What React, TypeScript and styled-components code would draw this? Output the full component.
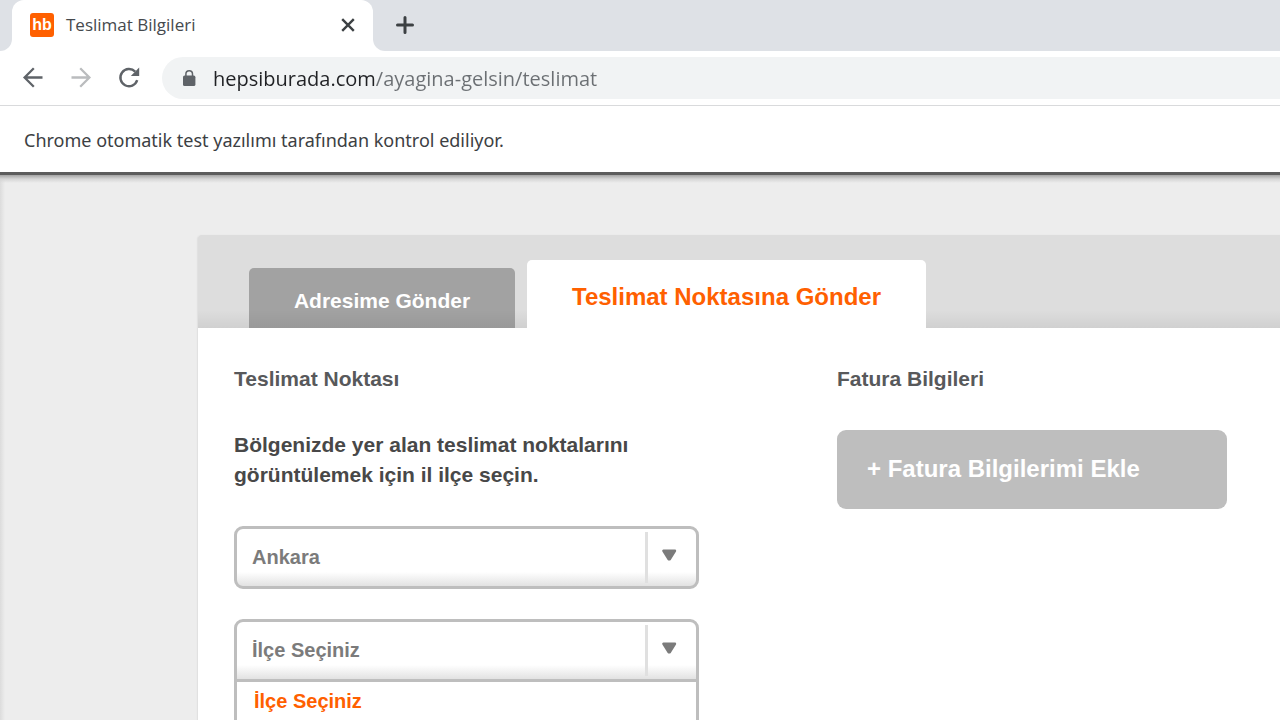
import React, { useState } from "react";
import styled, { createGlobalStyle } from "styled-components";

const GlobalStyle = createGlobalStyle`
  *, *::before, *::after { box-sizing: border-box; }
  body { margin: 0; background: #ededed; }
  button, input, select { font: inherit; }
`;

const uiFont = `"Open Sans", "Noto Sans", sans-serif`;
const siteFont = `"Liberation Sans", Arial, sans-serif`;

const Window = styled.div`
  display: flex;
  flex-direction: column;
  height: 100vh;
  overflow: hidden;
`;

const BrowserChrome = styled.header`
  font-family: ${uiFont};
  background: #fff;
  flex: none;
`;

const TabStrip = styled.div`
  display: flex;
  height: 51px;
  background: #fff;
`;

const StripEdge = styled.div`
  width: 12px;
  background: #dee1e6;
  border-bottom-right-radius: 12px;
`;

const StripRest = styled.div`
  flex: 1;
  display: flex;
  align-items: center;
  padding: 0 0 2px 20px;
  background: #dee1e6;
  border-bottom-left-radius: 12px;
`;

const TabBackdrop = styled.div`
  display: flex;
  width: 361px;
  background: #dee1e6;
`;

const BrowserTab = styled.div`
  flex: 1;
  display: flex;
  align-items: center;
  padding: 0 13px 2px 18px;
  background: #fff;
  border-radius: 12px 12px 0 0;
`;

const Favicon = styled.span`
  width: 24px;
  height: 24px;
  border-radius: 3px;
  background: #ff6000;
  color: #fff;
  font: bold 16px/24px ${siteFont};
  text-align: center;
`;

const TabTitle = styled.span`
  flex: 1;
  margin-left: 12px;
  font-size: 17px;
  line-height: 24px;
  color: #45494d;
`;

const IconButton = styled.button<{ $color?: string }>`
  display: grid;
  place-items: center;
  width: 24px;
  height: 24px;
  padding: 0;
  border: 0;
  background: none;
  color: ${(p) => p.$color ?? "#5f6368"};
`;

const Toolbar = styled.div`
  display: flex;
  align-items: center;
  gap: 24px;
  height: 55px;
  padding-left: 21px;
  border-bottom: 1px solid #d9dadc;
`;

const AddressBar = styled.label`
  flex: 1;
  display: flex;
  align-items: center;
  gap: 16px;
  height: 42px;
  margin-left: -3px;
  padding-left: 20px;
  border-radius: 21px 0 0 21px;
  background: #f1f3f4;
`;

const AddressInput = styled.input`
  flex: 1;
  min-width: 0;
  height: 32px;
  padding: 0;
  border: 0;
  outline: 0;
  font-size: 20px;
  color: transparent;
  caret-color: #202124;
  background: linear-gradient(to right, #202124 163px, #6b6f73 163px);
  background-clip: text;
  -webkit-background-clip: text;
`;

const InfoBar = styled.p`
  margin: 0;
  padding: 20px 24px 18px;
  font-family: "Noto Sans", "Open Sans", sans-serif;
  font-size: 18px;
  line-height: 28px;
  color: #3c4043;
`;

const Page = styled.main`
  flex: 1;
  display: flex;
  flex-direction: column;
  padding: 60px 0 0 198px;
  border-top: 3px solid #5c5c5c;
  background:
    linear-gradient(to bottom, #a4a4a4, #d6d6d6 4px, #ededed00 8px),
    linear-gradient(to right, #dcdcdc, #ededed 5px);
  font-family: ${siteFont};
  font-weight: bold;
`;

const Panel = styled.section`
  flex: 1;
  display: flex;
  flex-direction: column;
  border-top-left-radius: 3px;
  background: #fff;
  box-shadow: 0 1px 2px #00000030;
`;

const footShade = `linear-gradient(to top, #0000000f, #00000000 18px)`;

const DeliveryTabs = styled.div`
  display: flex;
  align-items: flex-end;
  gap: 12px;
  height: 93px;
  padding-left: 51px;
  border-top-left-radius: 3px;
  background: ${footShade}, #ddd;
`;

const DeliveryTab = styled.button<{ $active?: boolean }>`
  width: ${(p) => (p.$active ? 399 : 266)}px;
  height: ${(p) => (p.$active ? 68 : 60)}px;
  padding: 6px 0 0;
  border: 0;
  border-radius: 5px 5px 0 0;
  font-weight: bold;
  font-size: ${(p) => (p.$active ? 24 : 21)}px;
  color: ${(p) => (p.$active ? "#ff6000" : "#fff")};
  background: ${(p) => (p.$active ? "#fff" : `${footShade}, #a2a2a2`)};
`;

const Columns = styled.div`
  flex: 1;
  display: grid;
  grid-template-columns: 31fr 26fr;
  gap: 138px;
  padding: 36px 53px 0 36px;
`;

const Column = styled.div`
  display: flex;
  flex-direction: column;
  min-width: 0;
`;

const Heading = styled.h2`
  margin: 0 0 36px;
  font-size: 21px;
  line-height: 30px;
  color: #58595b;
`;

const Intro = styled.p`
  margin: 0 0 36px;
  font-size: 21px;
  line-height: 30px;
  color: #484848;
`;

const SelectBox = styled.label<{ $open?: boolean }>`
  position: relative;
  display: block;
  height: 63px;
  margin-bottom: ${(p) => (p.$open ? 0 : 30)}px;
  border: 3px solid #bebebe;
  border-radius: ${(p) => (p.$open ? "9px 9px 0 0" : "9px")};
  background: linear-gradient(to top, #e2e2e2, #fff 14px);
`;

const Select = styled.select`
  appearance: none;
  width: 100%;
  height: 100%;
  padding: 0 60px 2px 15px;
  border: 0;
  outline: 0;
  background: none;
  font-weight: bold;
  font-size: 20px;
  color: #7b7b7b;
`;

const SelectArrow = styled.span`
  position: absolute;
  top: 3px;
  right: 0;
  bottom: 3px;
  width: 51px;
  padding: 16px 0 0 12px;
  border-left: 3px solid #e0e0e0;
  pointer-events: none;

  svg { display: block; }
`;

const OptionList = styled.div`
  flex: 1;
  border: solid #bebebe;
  border-width: 0 3px;
`;

const Option = styled.button`
  display: block;
  width: 100%;
  height: 38px;
  padding: 0 17px;
  border: 0;
  background: none;
  text-align: left;
  font-weight: bold;
  font-size: 20px;
  color: #ff6000;
`;

const AddInvoice = styled.button`
  height: 79px;
  padding: 0 30px 2px;
  border: 0;
  border-radius: 9px;
  background: #bebebe;
  color: #fff;
  font-weight: bold;
  font-size: 24px;
  text-align: left;
`;

const Arrow = () => (
  <SelectArrow>
    <svg width="18" height="14" viewBox="0 0 18 14">
      <path d="M3.4 2.8h11.6L10 10.9q-.8 1-1.6 0z" fill="#7b7b7b" stroke="#7b7b7b" strokeWidth="2.4" strokeLinejoin="round" />
    </svg>
  </SelectArrow>
);

export default function App() {
  const [city, setCity] = useState("Ankara");
  const [district, setDistrict] = useState("İlçe Seçiniz");
  const [url, setUrl] = useState("hepsiburada.com/ayagina-gelsin/teslimat");

  return (
    <Window>
      <GlobalStyle />
      <BrowserChrome>
        <TabStrip>
          <StripEdge />
          <TabBackdrop>
            <BrowserTab>
              <Favicon>hb</Favicon>
              <TabTitle>Teslimat Bilgileri</TabTitle>
              <IconButton aria-label="Sekmeyi kapat" $color="#3c4043">
                <svg width="16" height="16" viewBox="0 0 16 16" fill="none" stroke="currentColor" strokeWidth="2.4">
                  <path d="M2.2 2.2l11.6 11.6M13.8 2.2L2.2 13.8" />
                </svg>
              </IconButton>
            </BrowserTab>
          </TabBackdrop>
          <StripRest>
            <IconButton aria-label="Yeni sekme" $color="#3c4043">
              <svg width="20" height="20" viewBox="0 0 20 20" fill="none" stroke="currentColor" strokeWidth="3" strokeLinecap="round">
                <path d="M10 2.5v15M2.5 10h15" />
              </svg>
            </IconButton>
          </StripRest>
        </TabStrip>
        <Toolbar>
          <IconButton aria-label="Geri">
            <svg width="24" height="24" viewBox="0 0 24 24" fill="none" stroke="currentColor" strokeWidth="2.3">
              <path d="M21.5 11.5H4M12.8 2.3L3.6 11.5l9.2 9.2" />
            </svg>
          </IconButton>
          <IconButton aria-label="İleri" $color="#babcbe">
            <svg width="24" height="24" viewBox="0 0 24 24" fill="none" stroke="currentColor" strokeWidth="2.3">
              <path d="M2.5 11.5H20M11.2 2.3l9.2 9.2-9.2 9.2" />
            </svg>
          </IconButton>
          <IconButton aria-label="Yenile">
            <svg width="24" height="24" viewBox="0 0 24 24" fill="none">
              <path d="M20.2 14.2A8.6 8.6 0 1 1 18.2 5.6" stroke="currentColor" strokeWidth="2.4" />
              <path d="M22.2 1.6v8.4H13.8z" fill="currentColor" />
            </svg>
          </IconButton>
          <AddressBar>
            <svg width="15" height="18" viewBox="0 0 15 18" fill="none">
              <rect x="1" y="6.6" width="12.4" height="10.4" rx="1.6" fill="#5f6368" />
              <path d="M3.9 7V5a3.3 3.3 0 0 1 6.6 0V7" stroke="#5f6368" strokeWidth="1.5" />
            </svg>
            <AddressInput aria-label="Adres" value={url} onChange={(e) => setUrl(e.target.value)} />
          </AddressBar>
        </Toolbar>
        <InfoBar>Chrome otomatik test yazılımı tarafından kontrol ediliyor.</InfoBar>
      </BrowserChrome>

      <Page>
        <Panel>
          <DeliveryTabs role="tablist">
            <DeliveryTab role="tab" aria-selected={false}>Adresime Gönder</DeliveryTab>
            <DeliveryTab role="tab" aria-selected $active>Teslimat Noktasına Gönder</DeliveryTab>
          </DeliveryTabs>
          <Columns>
            <Column>
              <Heading>Teslimat Noktası</Heading>
              <Intro>Bölgenizde yer alan teslimat noktalarını görüntülemek için il ilçe seçin.</Intro>
              <SelectBox>
                <Select aria-label="İl" value={city} onChange={(e) => setCity(e.target.value)}>
                  <option>Ankara</option>
                </Select>
                <Arrow />
              </SelectBox>
              <SelectBox $open>
                <Select aria-label="İlçe" value={district} onChange={(e) => setDistrict(e.target.value)}>
                  <option>İlçe Seçiniz</option>
                </Select>
                <Arrow />
              </SelectBox>
              <OptionList role="listbox" aria-label="İlçeler">
                <Option role="option" aria-selected onClick={() => setDistrict("İlçe Seçiniz")}>
                  İlçe Seçiniz
                </Option>
              </OptionList>
            </Column>
            <Column>
              <Heading>Fatura Bilgileri</Heading>
              <AddInvoice>+ Fatura Bilgilerimi Ekle</AddInvoice>
            </Column>
          </Columns>
        </Panel>
      </Page>
    </Window>
  );
}
